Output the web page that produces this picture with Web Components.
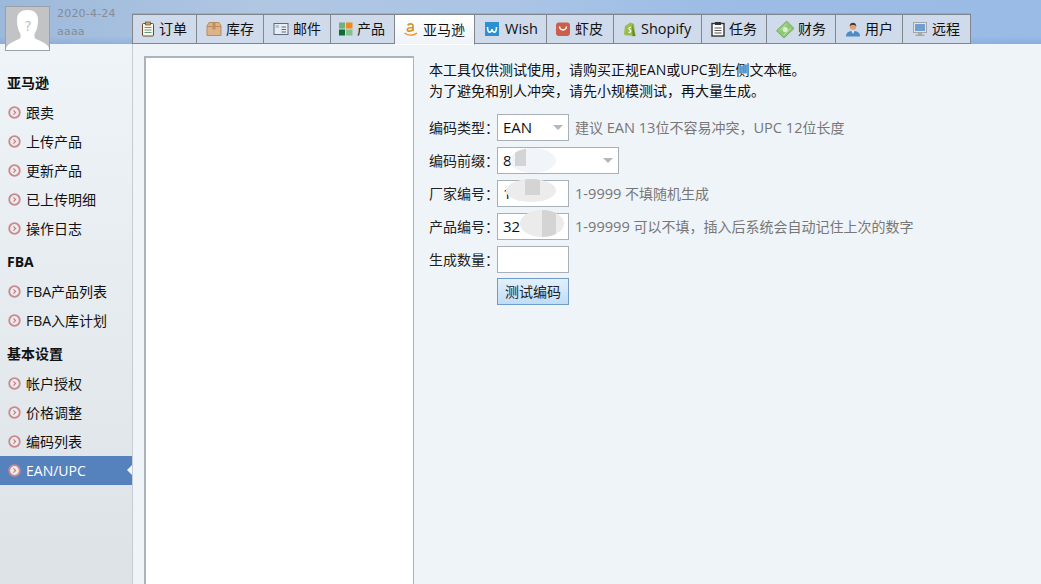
<!DOCTYPE html>
<html lang="zh">
<head>
<meta charset="utf-8">
<title>EAN/UPC</title>
<style>
    html, body{
        margin: 0;
        height: 100%;
        overflow: hidden;
    }
    body{
        font: 14px/21px "Open Sans", "Noto Sans CJK SC", sans-serif;
        color: #111;
    }
</style>
</head>
<body>
<erp-app>
    <top-bar slot="top">
        <nav-tab style="width:65px;--ox:26px" label="订单" icon="order"></nav-tab>
        <nav-tab style="width:67px;--ox:29px" label="库存" icon="box"></nav-tab>
        <nav-tab style="width:67px;--ox:29px" label="邮件" icon="mail"></nav-tab>
        <nav-tab style="width:64px;--ox:26px" label="产品" icon="product"></nav-tab>
        <nav-tab style="width:80px;--ox:28px" label="亚马逊" icon="amazon" active></nav-tab>
        <nav-tab style="width:72px;--ox:30px" label="Wish" icon="wish"></nav-tab>
        <nav-tab style="width:67px;--ox:28px" label="虾皮" icon="shopee"></nav-tab>
        <nav-tab style="width:88px;--ox:27px" label="Shopify" icon="shopify"></nav-tab>
        <nav-tab style="width:65px;--ox:27px" label="任务" icon="task"></nav-tab>
        <nav-tab style="width:69px;--ox:31px" label="财务" icon="money" size="18"></nav-tab>
        <nav-tab style="width:67px;--ox:29px" label="用户" icon="user"></nav-tab>
        <nav-tab style="width:68px;--ox:29px" label="远程" icon="remote"></nav-tab>
    </top-bar>
    <side-menu slot="side">
        <menu-title>亚马逊</menu-title>
        <menu-item>跟卖</menu-item>
        <menu-item>上传产品</menu-item>
        <menu-item>更新产品</menu-item>
        <menu-item>已上传明细</menu-item>
        <menu-item>操作日志</menu-item>
        <menu-title>FBA</menu-title>
        <menu-item>FBA产品列表</menu-item>
        <menu-item>FBA入库计划</menu-item>
        <menu-title>基本设置</menu-title>
        <menu-item>帐户授权</menu-item>
        <menu-item>价格调整</menu-item>
        <menu-item>编码列表</menu-item>
        <menu-item active>EAN/UPC</menu-item>
    </side-menu>
    <code-tool></code-tool>
</erp-app>

<script>
const ICONS = {
    order: `<rect x="2.500" y="2.500" width="11" height="12.500" rx="1" fill="#fbf8ee" stroke="#6b4a2c"/><rect x="5.500" y="1" width="5" height="3" fill="#c9a36a" stroke="#6b4a2c" stroke-width=".7"/><path d="M4.500 6.500h7M4.500 9h7M4.500 11.500h7" stroke="#5f9a80"/>`,
    box: `<path d="M1 5l2-3.500h10L15 5v9.500H1z" fill="#dcb488" stroke="#b98d5f"/><path d="M1 5.500h14" stroke="#b98d5f"/><rect x="6.500" y="2" width="3" height="6.500" fill="#c08f5c"/>`,
    mail: `<rect x="1" y="2.500" width="14" height="11" fill="#e9eef4" stroke="#5c6b7e"/><path d="M8.500 6h4.500M8.500 8.500h4.500M8.500 11h4.500" stroke="#5c6b7e"/><rect x="2.500" y="4" width="3.500" height="3" fill="#b5c5d8"/>`,
    product: `<rect x="1" y="1.500" width="6" height="6" fill="#6fb07c"/><rect x="8" y="1.500" width="6.500" height="6" fill="#f08a1d"/><rect x="1" y="8.500" width="6" height="6" fill="#0f6a34"/><rect x="8" y="8.500" width="6.500" height="6" fill="#84c08f"/>`,
    amazon: `<path d="M5 4.500c.3-2 4.800-2.300 5 .3v5.200M10 6.500C6.500 6.500 4.300 7 4.300 8.800c0 2 4 1.800 5.700-.4" fill="none" stroke="#d8912f" stroke-width="1.700"/><path d="M1.500 12c3.500 2.700 9 2.900 12.500.2" fill="none" stroke="#ee9a2a" stroke-width="1.500"/>`,
    wish: `<rect x="1" y="1" width="14" height="14" fill="#2b90d2"/><path d="M3.500 6c0 7 4 6 4.500 2 .5 4 4.500 5 4.500-2" fill="none" stroke="#fff" stroke-width="1.600"/>`,
    shopee: `<rect x="1" y="1.500" width="14" height="13.500" rx="3" fill="#c8604a"/><path d="M4.500 5.500c.5 4.500 6.500 4.500 7 0" fill="none" stroke="#fff" stroke-width="1.500"/>`,
    shopify: `<path d="M3 5l5.500-3.500L12 3l1.500 12-10.500-.7L2 13z" fill="#9dbb4b"/><path d="M10 2.500L13.500 15l-3 .3z" fill="#5d8e2f"/><path d="M9 6.500c-2.500-.8-2.500 1.800-1 2.500 1.500.8.500 3-1.500 2" fill="none" stroke="#fff" stroke-width="1.200"/>`,
    task: `<rect x="2" y="2.500" width="12" height="12.500" fill="#fff" stroke="#333" stroke-width="1.400"/><rect x="5" y="1" width="6" height="3" fill="#333"/><path d="M4.500 7h7M4.500 9.500h7M4.500 12h7" stroke="#555"/>`,
    money: `<path d="M.5 9.500L9.500 1l6.500 6.500-9 8.500z" fill="#8ec775" stroke="#6fa858" stroke-width=".8"/><circle cx="8.200" cy="8.500" r="2.300" fill="#d9f0c8"/><path d="M3 9.500l6.500-6M6.500 13.500l6.500-6" stroke="#c4e6ae" stroke-width=".8"/>`,
    user: `<path d="M1 15.500c0-4 2.500-5.500 7-5.500s7 1.500 7 5.500z" fill="#4d8cc4"/><path d="M6.500 10l1.500 3 1.500-3z" fill="#e6eef5"/><circle cx="8" cy="5.500" r="3.300" fill="#dba27c"/><path d="M4.700 5c0-4.500 6.600-4.500 6.600 0C10 3.500 6 3.500 4.700 5z" fill="#4a3a30"/>`,
    remote: `<rect x="1.500" y="1.500" width="13" height="10" fill="#e3e3e3" stroke="#a5a5a5"/><rect x="3" y="3" width="10" height="7" fill="#6f9fd0"/><path d="M6 12h4v1.500h2.500v1.500h-9v-1.500H6z" fill="#a8a8a8"/>`
};

class ErpApp extends HTMLElement{
    constructor(){
        super();
        this.attachShadow({mode: "open"}).innerHTML = `
        <style>
            :host{
                display: grid;
                grid-template-columns: 133px 1fr;
                grid-template-rows: 44px 1fr;
                height: 100vh;
                background: #eff4f9;
            }
            .top{
                grid-column: 1 / 3;
            }
            .main{
                min-height: 0;
            }
        </style>
        <div class="top"><slot name="top"></slot></div>
        <slot name="side"></slot>
        <div class="main"><slot></slot></div>
        `;
    }
}

class TopBar extends HTMLElement{
    constructor(){
        super();
        this.attachShadow({mode: "open"}).innerHTML = `
        <style>
            :host{
                display: flex;
                height: 44px;
                position: relative;
                z-index: 2;
                background:
                    linear-gradient(180deg, transparent 36px, rgba(120,160,215,.45) 44px),
                    linear-gradient(100deg, #9cb8da 0, #b0c7e2 25%, #a9c4e5 50%, #9cbce6 70%, #99bbe6 100%);
            }
            .avatar{
                flex: none;
                box-sizing: border-box;
                width: 45px;
                height: 45px;
                margin: 6px 0 0 5px;
                border: 1px solid #9aa0a8;
                background: #c2c3c5;
            }
            .avatar svg{
                display: block;
            }
            .who{
                flex: none;
                width: 82px;
                padding: 5px 0 0 7px;
                box-sizing: border-box;
                font: 11px/18px "DejaVu Sans", sans-serif;
                letter-spacing: .2px;
                color: #858c96;
            }
            .tabs{
                display: flex;
                margin: 14px 0 0 0;
                height: 30px;
            }
        </style>
        <div class="avatar">
            <svg width="43" height="43" viewBox="0 0 43 43">
                <path d="M0 43v-2c2-5 9-7 13-9 2-1 2-4 1-6-2-3-3-8-3-13C11 6 15 3 21.500 3S32 6 32 13c0 5-1 10-3 13-1 2-1 5 1 6 4 2 11 4 13 9v2z" fill="#fff"/>
                <text x="22" y="24" text-anchor="middle" font-family="DejaVu Sans" font-size="14" fill="#c2c3c5">?</text>
            </svg>
        </div>
        <div class="who">2020-4-24<br>aaaa</div>
        <div class="tabs"><slot></slot></div>
        `;
    }
}

class NavTab extends HTMLElement{
    constructor(){
        super();
        this.attachShadow({mode: "open"}).innerHTML = `
        <style>
            :host{
                display: flex;
                align-items: center;
                flex: none;
                box-sizing: border-box;
                height: 30px;
                padding: 0 0 1px 0;
                background: #cfdaea;
                border: solid #7f868e;
                border-width: 1px 1px 1px 0;
                box-shadow: 0 -1px 0 rgba(128,135,143,.35);
                color: #111;
                white-space: nowrap;
            }
            :host(:first-child){
                border-left-width: 1px;
            }
            :host([active]){
                background: linear-gradient(180deg, #fff 0, #eff4f9 100%);
                border-bottom-color: transparent;
                height: 31px;
            }
            :host([icon="wish"]), :host([icon="shopify"]){
                font-size: 14.5px;
            }
            .icon{
                flex: none;
                box-sizing: border-box;
                display: flex;
                justify-content: center;
                width: var(--ox, 28px);
                padding-left: 4px;
            }
            svg{
                display: block;
            }
        </style>
        <div class="icon"><svg id="icon" width="16" height="16" viewBox="0 0 16 16"></svg></div>
        <span id="label"></span>
        `;
    }

    connectedCallback(){
        const icon = this.shadowRoot.getElementById("icon");
        icon.innerHTML = ICONS[this.getAttribute("icon")] || "";
        if(this.hasAttribute("size")){
            icon.setAttribute("width", this.getAttribute("size"));
            icon.setAttribute("height", this.getAttribute("size"));
        }
        this.shadowRoot.getElementById("label").textContent = this.getAttribute("label");
    }
}

class SideMenu extends HTMLElement{
    constructor(){
        super();
        this.attachShadow({mode: "open"}).innerHTML = `
        <style>
            :host{
                display: block;
                box-sizing: border-box;
                padding-top: 25px;
                border-right: 1px solid #c6ccd4;
                background: linear-gradient(180deg, #eff4f9 0, #dde2e7 100%);
            }
        </style>
        <slot></slot>
        `;
    }
}

class MenuTitle extends HTMLElement{
    constructor(){
        super();
        this.attachShadow({mode: "open"}).innerHTML = `
        <style>
            :host{
                display: block;
                height: 29px;
                padding-left: 7px;
                box-sizing: border-box;
                font-weight: 700;
                line-height: 28px;
                margin-top: 5px;
            }
            :host(:first-child){
                margin-top: 0;
            }
        </style>
        <slot></slot>
        `;
    }
}

class MenuItem extends HTMLElement{
    constructor(){
        super();
        this.attachShadow({mode: "open"}).innerHTML = `
        <style>
            :host{
                display: flex;
                align-items: center;
                gap: 5px;
                height: 29px;
                padding-left: 8px;
                position: relative;
            }
            :host([active]){
                background: #5581bd;
                color: #fff;
            }
            :host([active])::after{
                content: "";
                position: absolute;
                right: 0;
                top: 9px;
                border: 5px solid transparent;
                border-left-width: 0;
                border-right-color: #eff4f9;
            }
            svg{
                flex: none;
                display: block;
            }
        </style>
        <svg width="13" height="13" viewBox="0 0 13 13">
            <circle cx="6.500" cy="6.500" r="5.300" fill="#efe9ea" stroke="#c98a8f" stroke-width="1.800"/>
            <path d="M5.400 4.300L7.600 6.500 5.400 8.700" fill="none" stroke="#b58087" stroke-width="1.100"/>
        </svg>
        <span><slot></slot></span>
        `;
    }
}

class FormRow extends HTMLElement{
    constructor(){
        super();
        this.attachShadow({mode: "open"}).innerHTML = `
        <style>
            :host{
                display: flex;
                align-items: center;
                height: 28px;
                margin-bottom: 5px;
            }
            .label{
                flex: none;
                width: 68px;
                color: #222;
                white-space: nowrap;
            }
            .hint{
                margin-left: 6px;
                color: #777;
                white-space: nowrap;
            }
        </style>
        <span class="label" id="label"></span>
        <slot></slot>
        <span class="hint"><slot name="hint"></slot></span>
        `;
    }

    connectedCallback(){
        this.shadowRoot.getElementById("label").textContent = this.getAttribute("label") || "";
    }
}

class FieldBox extends HTMLElement{
    constructor(){
        super();
        this.attachShadow({mode: "open"}).innerHTML = `
        <style>
            :host{
                display: flex;
                align-items: center;
                flex: none;
                position: relative;
                box-sizing: border-box;
                width: 72px;
                height: 27px;
                padding-left: 5px;
                background: #fff;
                border: 1px solid #a9b0ba;
                color: #111;
                font-size: 15px;
            }
            :host([wide]){
                width: 122px;
            }
            :host([select])::after{
                content: "";
                position: absolute;
                right: 5px;
                top: 10px;
                border: 5px solid transparent;
                border-top: 5px solid #b3b8bf;
                border-bottom-width: 0;
            }
        </style>
        <slot></slot>
        `;
    }
}

/* smudge that hides part of a value, lies over the field */
class BlurPatch extends HTMLElement{
    constructor(){
        super();
        this.attachShadow({mode: "open"}).innerHTML = `
        <style>
            :host{
                display: block;
                position: absolute;
                z-index: 1;
                border-radius: 50%;
                background: var(--patch, #f0f0f0);
                overflow: hidden;
            }
            div{
                position: absolute;
                background: var(--block, #d4d4d4);
            }
        </style>
        <div id="block"></div>
        `;
    }

    connectedCallback(){
        const [left, top, width, height] = this.getAttribute("block").split(",");
        this.shadowRoot.getElementById("block").style.cssText =
            `left:${left}px;top:${top}px;width:${width}px;height:${height}px`;
    }
}

class CodeTool extends HTMLElement{
    constructor(){
        super();
        this.attachShadow({mode: "open"}).innerHTML = `
        <style>
            :host{
                display: flex;
                height: 100%;
                padding: 12px 0 0 11px;
                box-sizing: border-box;
                overflow: hidden;
            }
            .codes{
                flex: none;
                box-sizing: border-box;
                width: 270px;
                height: 560px;
                background: #fff;
                border: 1px solid #adb3bc;
                border-top-width: 2px;
                border-left-width: 2px;
            }
            .panel{
                padding: 3px 0 0 15px;
            }
            p{
                margin: 0 0 12px;
            }
            .la{
                font-size: 14.6px;
            }
            .go{
                display: flex;
                align-items: center;
                justify-content: center;
                box-sizing: border-box;
                width: 72px;
                height: 27px;
                margin-left: 68px;
                border: 1px solid #6f9cc8;
                background: linear-gradient(180deg, #e3f0fb 0, #bfddf7 100%);
                color: #222;
            }
        </style>
        <div class="codes"></div>
        <div class="panel">
            <p>本工具仅供测试使用，请购买正规EAN或UPC到左侧文本框。<br>为了避免和别人冲突，请先小规模测试，再大量生成。</p>
            <form-row label="编码类型：">
                <field-box select>EAN</field-box>
                <span slot="hint">建议 <span class="la">EAN 13</span>位不容易冲突，<span class="la">UPC 12</span>位长度</span>
            </form-row>
            <form-row label="编码前缀：">
                <field-box select wide>8.
                    <blur-patch style="left:12px;top:0;width:46px;height:25px;--patch:#f1f4f8" block="5,0,11,18"></blur-patch>
                </field-box>
            </form-row>
            <form-row label="厂家编号：">
                <field-box>1
                    <blur-patch style="left:8px;top:-2px;width:50px;height:23px;--patch:#ececec" block="19,0,15,16"></blur-patch>
                </field-box>
                <span slot="hint"><span class="la">1-9999</span> 不填随机生成</span>
            </form-row>
            <form-row label="产品编号：">
                <field-box>32
                    <blur-patch style="left:22px;top:-4px;width:44px;height:27px;--patch:#ebebeb" block="22,0,14,27"></blur-patch>
                </field-box>
                <span slot="hint"><span class="la">1-99999</span> 可以不填，插入后系统会自动记住上次的数字</span>
            </form-row>
            <form-row label="生成数量："><field-box></field-box></form-row>
            <div class="go">测试编码</div>
        </div>
        `;
    }
}

customElements.define("erp-app", ErpApp);
customElements.define("top-bar", TopBar);
customElements.define("nav-tab", NavTab);
customElements.define("side-menu", SideMenu);
customElements.define("menu-title", MenuTitle);
customElements.define("menu-item", MenuItem);
customElements.define("form-row", FormRow);
customElements.define("field-box", FieldBox);
customElements.define("blur-patch", BlurPatch);
customElements.define("code-tool", CodeTool);
</script>
</body>
</html>
